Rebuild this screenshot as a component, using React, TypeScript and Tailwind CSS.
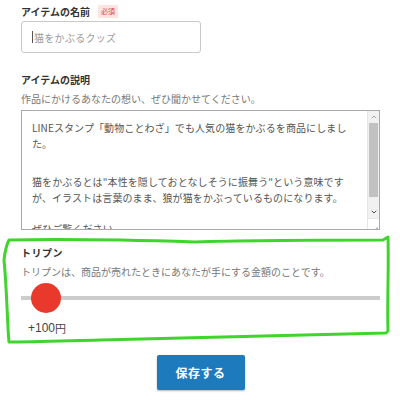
import { ChevronUp, ChevronDown } from 'lucide-react';

const font = "font-['Noto_Sans_CJK_JP','Noto_Sans',sans-serif]";

function Annotation() {
  // hand-drawn green highlight around the slider block
  return (
    <svg className="absolute inset-0 pointer-events-none" width={400} height={400} viewBox="0 0 400 400">
      <path
        d="M9 240 C 60 239, 130 240, 195 242 C 250 240, 330 240, 383 240 L 388 237 C 389 270, 387 300, 388 331 L 386 333 C 300 335, 200 338, 100 340 C 60 341, 30 342, 9 342 C 7 320, 7 290, 4 260 C 5 250, 7 244, 9 240 Z"
        fill="none"
        stroke="#3fd52c"
        strokeWidth={3}
        strokeLinejoin="round"
      />
    </svg>
  );
}

function FakeTextarea() {
  return (
    <div className="mt-[4px] h-[120px] border border-[#a9a9a9] flex bg-white overflow-hidden">
      <div className="flex-1 pl-[10px] pr-[6px] pt-[9px] text-[10px] leading-[16px] text-[#555] tracking-[0.1px]">
        <p>LINEスタンプ「動物ことわざ」でも人気の猫をかぶるを商品にしました。</p>
        <p className="mt-[22px]">猫をかぶるとは"本性を隠しておとなしそうに振舞う"という意味ですが、イラストは言葉のまま、狼が猫をかぶっているものになります。</p>
        <p className="mt-[15px]">ぜひご覧ください。</p>
      </div>
      <div className="w-[12px] flex flex-col bg-[#f1f1f1] border-l border-[#e6e6e6]">
        <div className="h-[12px] flex items-center justify-center text-[#a3a3a3]">
          <ChevronUp size={8} strokeWidth={3} />
        </div>
        <div className="mx-[1px] h-[74px] bg-[#c1c1c1]"></div>
        <div className="flex-1"></div>
        <div className="h-[12px] flex items-center justify-center text-[#505050]">
          <ChevronDown size={8} strokeWidth={3} />
        </div>
        <div className="h-[11px] bg-white border-t border-[#e6e6e6] relative">
          <div className="absolute right-[1px] bottom-[1px] w-[7px] h-[1px] bg-[#aaa] rotate-[-45deg] origin-bottom-right"></div>
          <div className="absolute right-[1px] bottom-[1px] w-[4px] h-[1px] bg-[#aaa] rotate-[-45deg] origin-bottom-right"></div>
        </div>
      </div>
    </div>
  );
}

export default function App() {
  return (
    <div className={`relative w-[400px] h-[400px] bg-white overflow-hidden ${font}`}>
      <div className="pl-[21px] pr-[20px] pt-[3px] flex flex-col">
        <div className="h-[16px] flex items-center gap-[8px]">
          <span className="text-[10px] font-bold text-[#333]">アイテムの名前</span>
          <span className="h-[13px] px-[3px] bg-[#fde4e1] text-[#d8463c] text-[7px] leading-[13px]">必須</span>
        </div>

        <div className="mt-[2px] w-[180px] h-[32px] border border-[#c9c9c9] rounded-[3px] flex items-center pl-[10px]">
          <span className="w-px h-[12px] bg-[#555] mr-[1px]"></span>
          <span className="text-[10px] text-[#9a9a9a] tracking-[0.3px]">猫をかぶるクッズ</span>
        </div>

        <div className="mt-[18px] h-[16px] flex items-center text-[10px] font-bold text-[#333]">アイテムの説明</div>
        <div className="mt-[3px] h-[16px] flex items-center text-[10px] text-[#777]">作品にかけるあなたの想い、ぜひ聞かせてください。</div>

        <FakeTextarea />

        <div className="mt-[14px] h-[16px] flex items-center text-[10px] font-bold text-[#333] tracking-[0.5px]">トリプン</div>
        <div className="mt-[3px] h-[16px] flex items-center text-[10px] text-[#777]">トリプンは、商品が売れたときにあなたが手にする金額のことです。</div>

        <div className="mt-[4px] h-[30px] relative flex items-center">
          <div className="w-full h-[4px] bg-[#cccccc]"></div>
          <div className="absolute left-[10px] top-0 w-[30px] h-[30px] rounded-full bg-[#e8392c]"></div>
        </div>

        <div className="mt-[7px] h-[16px] pl-[7px] flex items-center text-[12px] text-[#444] font-['Liberation_Sans','Noto_Sans_CJK_JP',sans-serif]">
          +100<span className="text-[11px] font-['Noto_Sans_CJK_JP',sans-serif]">円</span>
        </div>

        <div className="mt-[19px] flex justify-center">
          <button className="w-[88px] h-[35px] bg-[#1d7bbd] rounded-[2px] shadow-[0_1px_2px_rgba(0,0,0,0.3)] text-white text-[12px] font-bold tracking-[0.5px]">
            保存する
          </button>
        </div>
      </div>
      <Annotation />
    </div>
  );
}
